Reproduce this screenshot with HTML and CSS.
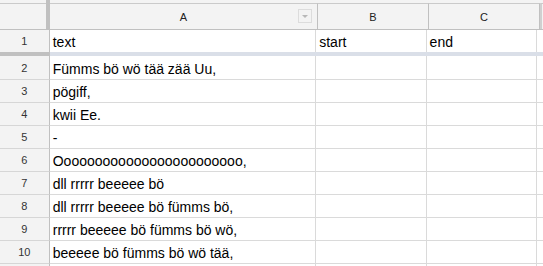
FILE: index.html
```html
<!DOCTYPE html>
<html lang="de">
<head>
    <meta charset="UTF-8">
    <title>Tabelle</title>
    <link rel="stylesheet" href="styles.css">
</head>
<body>
    <div class="sheet">
        <div class="row head">
            <div class="corner"></div>
            <div class="corner-bar"></div>
            <div class="col-head col-a">A<span class="filter"></span></div>
            <div class="col-head col-b">B</div>
            <div class="col-head col-c">C</div>
            <div class="col-head rest"></div>
        </div>

        <div class="row first">
            <div class="num">1</div>
            <div class="cell col-a">text</div>
            <div class="cell col-b">start</div>
            <div class="cell col-c">end</div>
            <div class="cell rest"></div>
        </div>

        <div class="freeze-bar">
            <div class="freeze-num"></div>
            <div class="freeze-data"></div>
        </div>

        <div class="row tall">
            <div class="num">2</div>
            <div class="cell col-a">Fümms bö wö tää zää Uu,</div>
            <div class="cell col-b"></div>
            <div class="cell col-c"></div>
            <div class="cell rest"></div>
        </div>
        <div class="row">
            <div class="num">3</div>
            <div class="cell col-a">pögiff,</div>
            <div class="cell col-b"></div>
            <div class="cell col-c"></div>
            <div class="cell rest"></div>
        </div>
        <div class="row">
            <div class="num">4</div>
            <div class="cell col-a">kwii Ee.</div>
            <div class="cell col-b"></div>
            <div class="cell col-c"></div>
            <div class="cell rest"></div>
        </div>
        <div class="row">
            <div class="num">5</div>
            <div class="cell col-a">-</div>
            <div class="cell col-b"></div>
            <div class="cell col-c"></div>
            <div class="cell rest"></div>
        </div>
        <div class="row">
            <div class="num">6</div>
            <div class="cell col-a">Oooooooooooooooooooooooo,</div>
            <div class="cell col-b"></div>
            <div class="cell col-c"></div>
            <div class="cell rest"></div>
        </div>
        <div class="row">
            <div class="num">7</div>
            <div class="cell col-a">dll rrrrr beeeee bö</div>
            <div class="cell col-b"></div>
            <div class="cell col-c"></div>
            <div class="cell rest"></div>
        </div>
        <div class="row">
            <div class="num">8</div>
            <div class="cell col-a">dll rrrrr beeeee bö fümms bö,</div>
            <div class="cell col-b"></div>
            <div class="cell col-c"></div>
            <div class="cell rest"></div>
        </div>
        <div class="row">
            <div class="num">9</div>
            <div class="cell col-a">rrrrr beeeee bö fümms bö wö,</div>
            <div class="cell col-b"></div>
            <div class="cell col-c"></div>
            <div class="cell rest"></div>
        </div>
        <div class="row">
            <div class="num">10</div>
            <div class="cell col-a">beeeee bö fümms bö wö tää,</div>
            <div class="cell col-b"></div>
            <div class="cell col-c"></div>
            <div class="cell rest"></div>
        </div>
        <div class="row">
            <div class="num"></div>
            <div class="cell col-a"></div>
            <div class="cell col-b"></div>
            <div class="cell col-c"></div>
            <div class="cell rest"></div>
        </div>
    </div>
</body>
</html>
```

FILE: styles.css
```css
* {
    box-sizing: border-box;
}

body {
    margin: 0;
    background: white;
    font-family: 'Liberation Sans', Arial, sans-serif;
    overflow: hidden;
}

.sheet {
    width: 543px;
    height: 266px;
    overflow: hidden;
}

.row {
    display: flex;
    height: 23px;
}

.row.first {
    height: 22px;
}

.row.tall {
    height: 24px;
}

/* header */
.head {
    height: 30px;
    background: #f3f3f3;
    border-bottom: 1px solid #c0c0c0;
}

.corner {
    width: 46px;
    margin-top: 3px;
    border-top: 1px solid #cacaca;
}

.corner-bar {
    width: 4px;
    background: #c0c0c0;
}

.col-head {
    position: relative;
    margin-top: 3px;
    border-top: 1px solid #cacaca;
    border-right: 1px solid #c0c0c0;
    display: flex;
    align-items: center;
    justify-content: center;
    font-size: 11px;
    color: #222;
}

.col-head.rest {
    flex: 1;
    border-right: none;
    border-left: 2px solid #d0d0d0;
}

.filter {
    position: absolute;
    top: 5px;
    right: 5px;
    width: 14px;
    height: 14px;
    border: 1px solid #dcdcdc;
}

.filter::after {
    content: '';
    position: absolute;
    left: 3px;
    top: 5px;
    border-left: 3px solid transparent;
    border-right: 3px solid transparent;
    border-top: 3px solid #b8b8b8;
}

.col-a {
    width: 268px;
}

.col-b,
.col-c {
    width: 111px;
}

.rest {
    flex: 1;
}

/* body cells */
.num {
    width: 50px;
    background: #f3f3f3;
    border-right: 1px solid #c0c0c0;
    border-bottom: 1px solid #d6d6d6;
    display: flex;
    align-items: center;
    justify-content: center;
    font-size: 11px;
    color: #333;
}

.cell {
    border-right: 1px solid #dadada;
    border-bottom: 1px solid #dadada;
    padding: 2px 3px 0;
    font-size: 14px;
    line-height: 20px;
    color: #000;
    white-space: nowrap;
    overflow: hidden;
}

.tall .cell {
    padding-top: 3px;
}

.cell.rest {
    border-right: none;
}

.first .num,
.first .cell {
    border-bottom: none;
}

.freeze-bar {
    display: flex;
    height: 4px;
}

.freeze-num {
    width: 50px;
    background: #c0c0c0;
}

.freeze-data {
    flex: 1;
    background: #dadfe8;
}
```
